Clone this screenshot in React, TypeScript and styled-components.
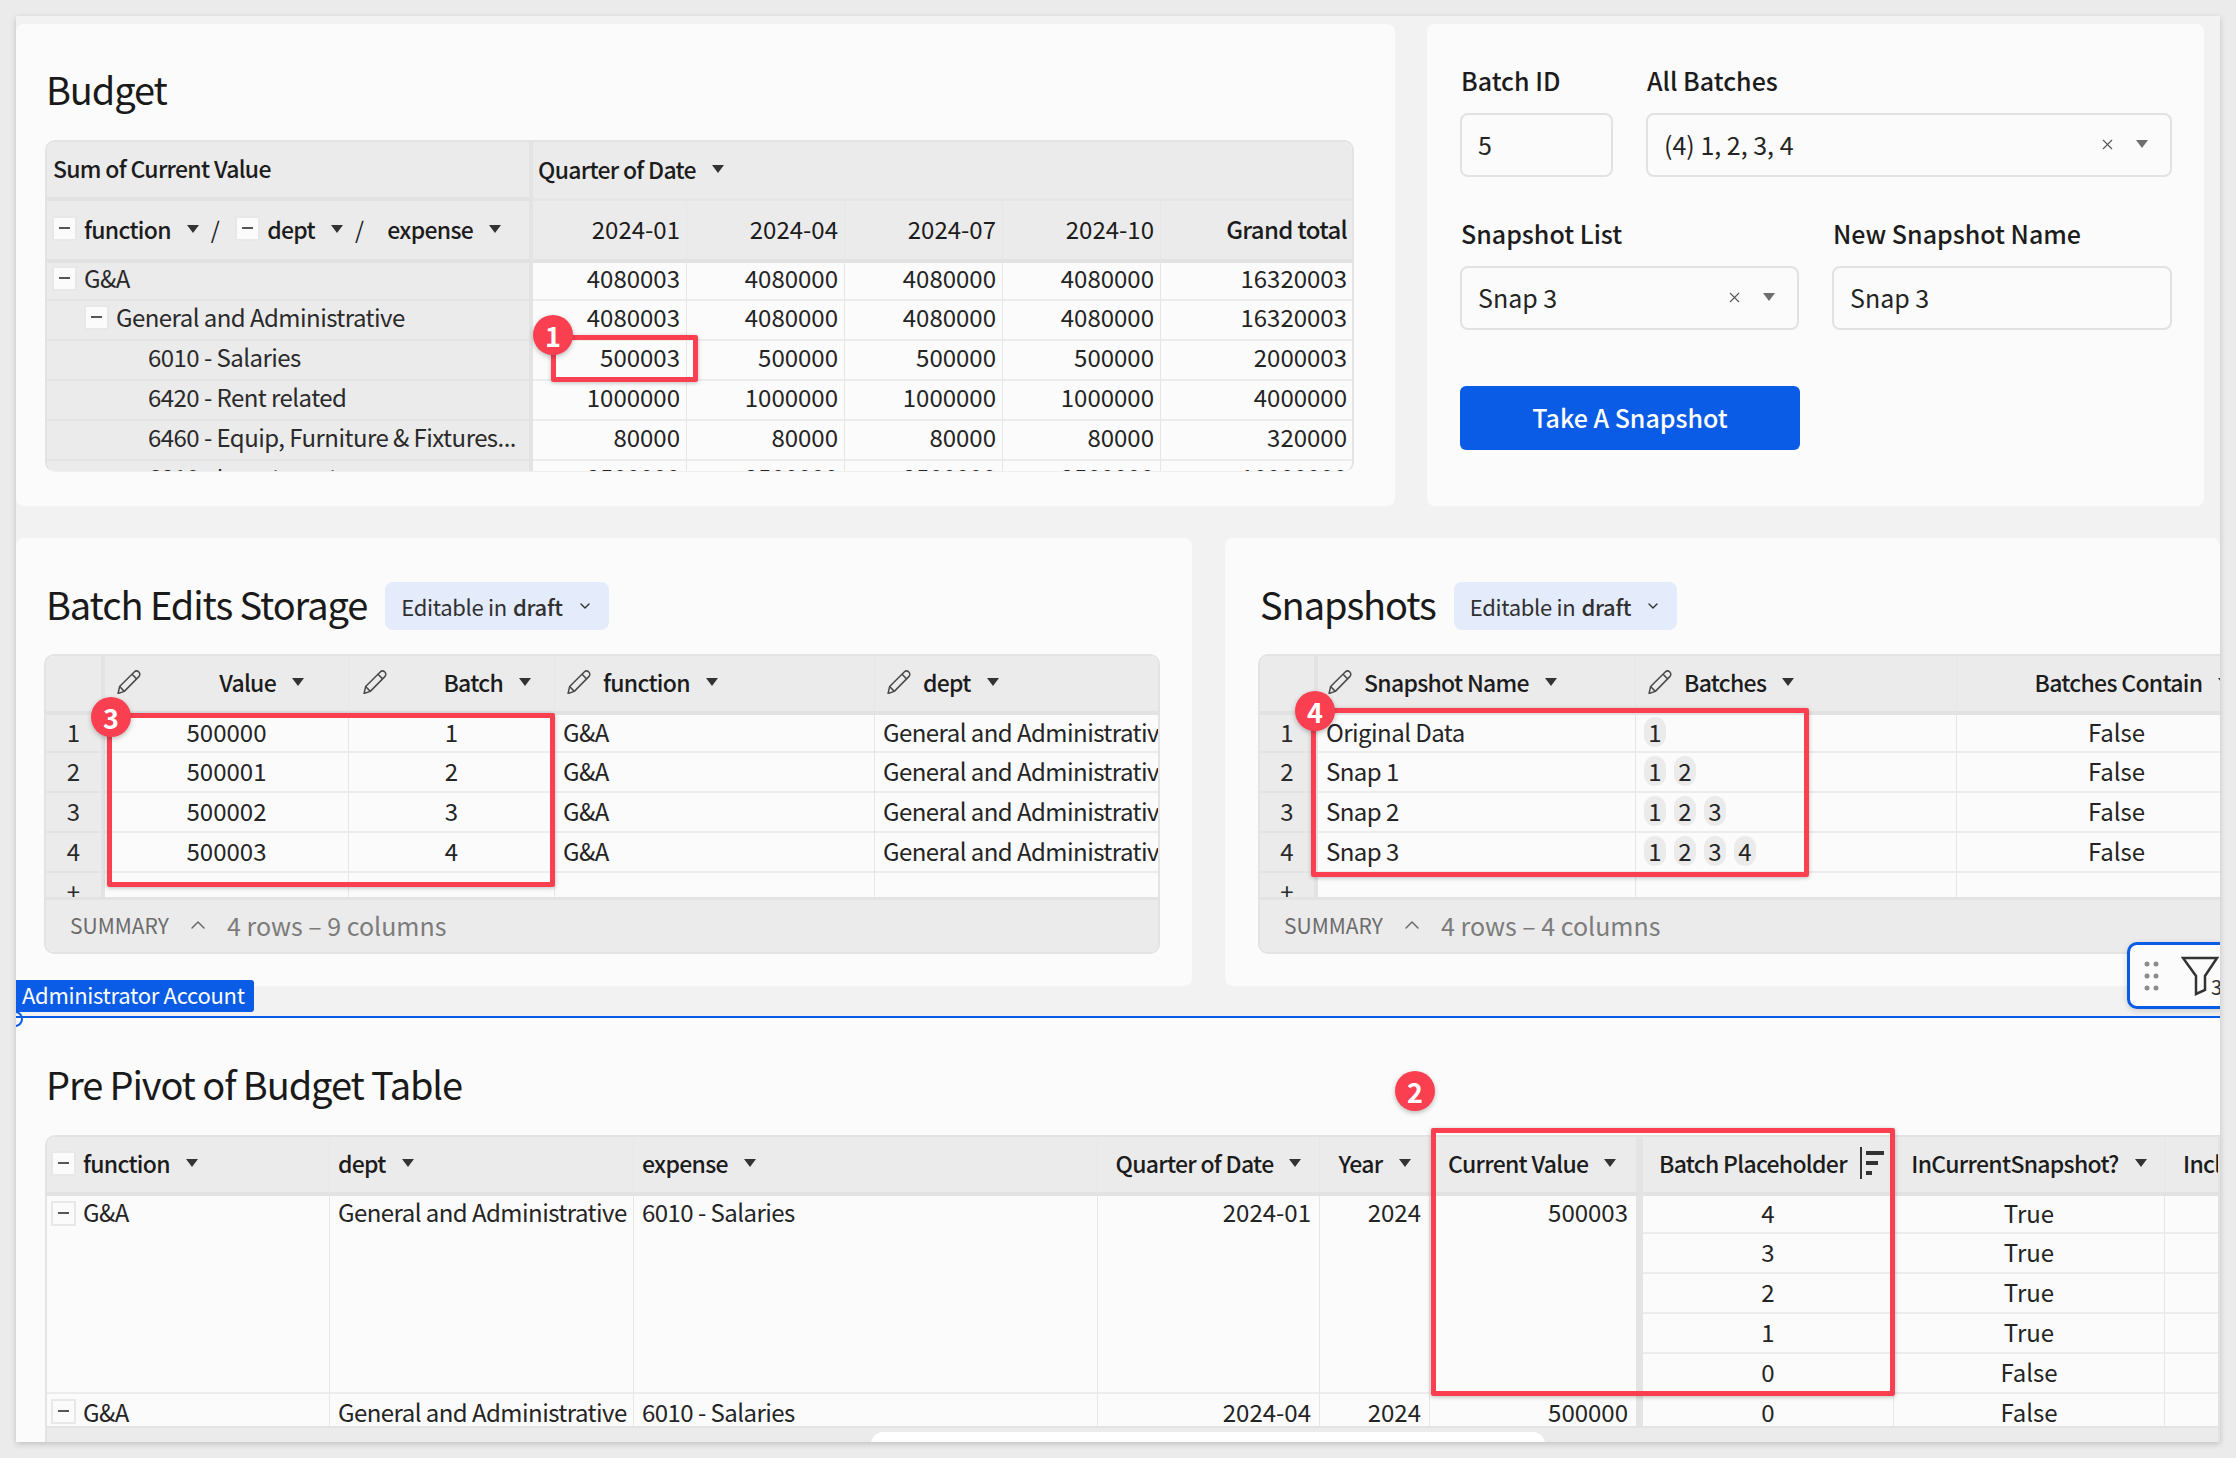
import React from "react";
import styled, { createGlobalStyle } from "styled-components";
import { ChevronDown, ChevronUp, X } from "lucide-react";

const GlobalStyle = createGlobalStyle`
  html, body {
    margin: 0;
    padding: 0;
    background: #ebebeb;
    overflow: hidden;
  }
  * {
    box-sizing: border-box;
  }
  #root {
    font-family: "Noto Sans CJK JP", "Noto Sans", sans-serif;
    color: #1f1f1f;
  }
`;

const Page = styled.div`
  width: 2236px;
  height: 1458px;
  padding: 16px;
`;

const Canvas = styled.div`
  position: relative;
  width: 2204px;
  height: 1426px;
  padding-top: 8px;
  background: #f2f2f2;
  box-shadow: 0 2px 6px rgba(0, 0, 0, 0.18);
  overflow: hidden;
  display: flex;
  flex-direction: column;
`;

const TopRow = styled.div`
  display: flex;
  gap: 32px;
  height: 482px;
`;

const MiddleRow = styled.div`
  display: flex;
  gap: 33px;
  height: 448px;
  margin-top: 32px;
`;

const Card = styled.section<{ $w?: number; $pad: string }>`
  flex: ${(p) => (p.$w ? `0 0 ${p.$w}px` : "1 1 0")};
  min-width: 0;
  display: flex;
  flex-direction: column;
  padding: ${(p) => p.$pad};
  background: #fbfbfb;
  border-radius: 8px;
  overflow: hidden;
`;

const BottomCard = styled.section`
  flex: 1;
  min-height: 0;
  display: flex;
  flex-direction: column;
  padding: 40px 0 0 29px;
  background: #fbfbfb;
`;

const Title = styled.h2`
  margin: 0 0 21px;
  padding-left: 1px;
  height: 56px;
  font-size: 38px;
  line-height: 51px;
  letter-spacing: -1.1px;
  font-weight: 400;
  color: #1a1a1a;
`;

const TitleRow = styled.div`
  display: flex;
  align-items: center;
  gap: 18px;
  height: 48px;
  margin-bottom: 24px;
  padding-left: 2px;
`;

const InlineTitle = styled(Title)`
  margin: 0;
  padding: 0;
`;

const Chip = styled.div`
  display: flex;
  align-items: center;
  gap: 14px;
  height: 48px;
  padding: 0 16px;
  background: #e4ebfa;
  border-radius: 8px;
  font-size: 22px;
  letter-spacing: -0.3px;
  color: #303030;
  b {
    margin-left: 6px;
    font-weight: 500;
  }
`;

const Table = styled.div<{ $h: number; $w?: number; $clip?: boolean }>`
  flex: none;
  display: flex;
  flex-direction: column;
  height: ${(p) => p.$h}px;
  width: ${(p) => (p.$w ? `${p.$w}px` : "auto")};
  border: 2px solid #e3e3e3;
  border-bottom: ${(p) => (p.$clip ? "1px solid #efefef" : "2px solid #e3e3e3")};
  border-radius: 10px;
  background: #fbfbfb;
  overflow: hidden;
`;

const OpenTable = styled(Table)`
  border-bottom: none;
  border-radius: 10px 0 0 0;
  flex: 1;
  height: auto;
`;

const Grid = styled.div<{ $cols: string; $rows: string; $h?: number; $lift?: number; $edge?: number }>`
  --lift: ${(p) => p.$lift ?? 3}px;
  --edge: ${(p) => p.$edge ?? 8}px;
  display: grid;
  flex: none;
  grid-template-columns: ${(p) => p.$cols};
  grid-template-rows: ${(p) => p.$rows};
  height: ${(p) => (p.$h ? `${p.$h}px` : "auto")};
  overflow: hidden;
`;

const Minus = styled.span`
  position: relative;
  flex: none;
  display: inline-block;
  width: 25px;
  height: 25px;
  margin-right: 7px;
  background: #fbfbfb;
  border: 2px solid #e8e8e8;
  &::after {
    content: "";
    position: absolute;
    left: 5px;
    right: 5px;
    top: 9px;
    height: 2px;
    background: #555;
  }
`;

const Cell = styled.div<{
  $align?: "left" | "center" | "right";
  $pad?: number;
  $span?: number;
  $colSpan?: number;
  $top?: boolean;
  $thick?: boolean;
}>`
  display: flex;
  align-items: ${(p) => (p.$top ? "flex-start" : "center")};
  justify-content: ${(p) =>
    p.$align === "right" ? "flex-end" : p.$align === "center" ? "center" : "flex-start"};
  grid-row: ${(p) => (p.$span ? `span ${p.$span}` : "auto")};
  grid-column: ${(p) => (p.$colSpan ? `span ${p.$colSpan}` : "auto")};
  min-width: 0;
  padding: 0 ${(p) => (p.$align === "right" ? "var(--edge)" : "0")} var(--lift)
    ${(p) => p.$pad ?? (p.$align === "center" ? 0 : 8)}px;
  font-size: 24px;
  line-height: ${(p) => (p.$top ? 32 : 30)}px;
  letter-spacing: -0.55px;
  white-space: nowrap;
  background: #fbfbfb;
  color: #242424;
  border-bottom: 2px solid #ececec;
  border-right: ${(p) => (p.$thick ? "7px solid #e4e4e4" : "1px solid #e6e6e6")};
  ${Minus} {
    margin-top: ${(p) => (p.$top ? 5 : 0)}px;
  }
`;

const Num = styled(Cell)`
  letter-spacing: 0;
`;

const Side = styled(Cell)`
  background: #ebebeb;
  color: #2a2a2a;
  border-bottom-color: #e4e4e4;
  border-right: 4px solid #e3e3e3;
`;

const SideNum = styled(Side)`
  letter-spacing: 0;
`;

const Head = styled(Cell)`
  background: #ebebeb;
  font-weight: 500;
  font-size: 23px;
  letter-spacing: -0.7px;
  padding-bottom: 3px;
  color: #1c1c1c;
  border-bottom: 4px solid #e2e2e2;
`;

const PlainHead = styled(Head)`
  font-weight: 400;
  font-size: 24px;
  letter-spacing: 0;
`;

const BoldHead = styled(Head)`
  font-size: 24px;
`;

const SideHead = styled(Head)`
  border-right: 4px solid #e3e3e3;
`;

const TopHead = styled(Head)`
  border-bottom: 3px solid #e6e6e6;
`;

const Caret = styled.span<{ $gap?: number; $grey?: boolean }>`
  flex: none;
  width: 0;
  height: 0;
  margin-left: ${(p) => p.$gap ?? 16}px;
  border-left: 6.5px solid transparent;
  border-right: 6.5px solid transparent;
  border-top: 8px solid ${(p) => (p.$grey ? "#6e6e6e" : "#333")};
`;

const Slash = styled.span<{ $after: number }>`
  margin: 0 ${(p) => p.$after}px 0 12px;
  font-weight: 400;
`;

const Spacer = styled.span<{ $w: number }>`
  flex: none;
  width: ${(p) => p.$w}px;
`;

const PencilWrap = styled.svg<{ $auto?: boolean }>`
  flex: none;
  width: 24px;
  height: 24px;
  margin-right: ${(p) => (p.$auto ? "auto" : "12px")};
`;

const Pencil = ({ $auto }: { $auto?: boolean }) => (
  <PencilWrap $auto={$auto} viewBox="1 1 22 22" fill="none" stroke="#4a4a4a" strokeWidth="1.4" strokeLinejoin="round">
    <path d="M2 22.5 L3.4 16.2 L16.8 2.9 C18 1.7 19.8 1.7 21 2.9 C22.2 4.1 22.2 5.9 21 7.1 L7.7 20.6 Z" />
    <path d="M14.8 4.9 L19 9.1 M3.4 16.2 L7.7 20.6" />
  </PencilWrap>
);

const SortMark = styled.svg`
  flex: none;
  width: 24px;
  height: 32px;
  margin-left: 13px;
`;

const Pill = styled.span`
  flex: none;
  width: 22px;
  height: 30px;
  margin-right: 8px;
  border-radius: 11px;
  background: #ebebeb;
  text-align: center;
  line-height: 30px;
  letter-spacing: 0;
`;

const Summary = styled.div`
  flex: 1;
  display: flex;
  align-items: center;
  padding: 0 0 2px 24px;
  background: #ebebeb;
  border-top: 3px solid #e3e3e3;
  font-size: 21px;
  color: #6b6b6b;
  svg {
    margin: 0 17px 0 17px;
  }
  span:last-child {
    font-size: 25px;
    color: #7c7c7c;
  }
`;

const ScrollTrack = styled.div`
  flex: 1;
  padding: 4px 0 0 824px;
  background: #ebebeb;
  border-top: 2px solid #e3e3e3;
`;

const ScrollThumb = styled.div`
  width: 674px;
  height: 14px;
  background: #fff;
  border-radius: 12px 12px 0 0;
`;

const FieldRow = styled.div`
  display: flex;
  gap: 33px;
  margin-bottom: 33px;
`;

const Field = styled.div<{ $w: number }>`
  flex: none;
  width: ${(p) => p.$w}px;
`;

const Label = styled.div`
  height: 48px;
  margin-bottom: 8px;
  padding-left: 1px;
  font-size: 25px;
  line-height: 47px;
  font-weight: 500;
  color: #1c1c1c;
`;

const InputBox = styled.div`
  display: flex;
  align-items: center;
  height: 64px;
  padding: 0 22px 2px 16px;
  border: 2px solid #e2e2e2;
  border-radius: 8px;
  font-size: 25px;
  color: #242424;
  svg {
    margin-left: auto;
    color: #555;
  }
`;

const SubmitButton = styled.div`
  display: flex;
  align-items: center;
  justify-content: center;
  width: 340px;
  height: 64px;
  margin-top: 23px;
  padding-bottom: 2px;
  border-radius: 6px;
  background: #0a5ce6;
  color: #fff;
  font-size: 25px;
  font-weight: 500;
`;

const Divider = styled.div`
  position: relative;
  flex: none;
  height: 2px;
  margin-top: 30px;
  background: #0a5ce6;
  z-index: 2;
  &::before {
    content: "";
    position: absolute;
    left: -9px;
    top: -5px;
    width: 12px;
    height: 12px;
    border: 2px solid #0a5ce6;
    border-radius: 50%;
  }
`;

const AccountTag = styled.div`
  position: absolute;
  left: 0;
  bottom: 6px;
  display: flex;
  align-items: center;
  width: 238px;
  height: 32px;
  padding: 0 0 4px 6px;
  background: #0a5ce6;
  border-radius: 0 3px 3px 0;
  color: #fff;
  font-size: 22px;
  line-height: 25px;
  letter-spacing: -0.3px;
  white-space: nowrap;
`;

const FilterDock = styled.div`
  position: absolute;
  left: 2111px;
  top: 926px;
  display: flex;
  align-items: center;
  width: 120px;
  height: 67px;
  padding-left: 13px;
  background: #fbfbfb;
  border: 3px solid #0a5ce6;
  border-radius: 10px;
  box-shadow: 0 2px 6px rgba(0, 0, 0, 0.15);
  svg {
    flex: none;
  }
`;

const FilterCount = styled.span`
  position: absolute;
  left: 81px;
  top: 30px;
  font-size: 20px;
  line-height: 24px;
  color: #333;
`;

const RedBox = styled.div<{ $x: number; $y: number; $w: number; $h: number }>`
  position: absolute;
  left: ${(p) => p.$x - 16}px;
  top: ${(p) => p.$y - 16}px;
  width: ${(p) => p.$w}px;
  height: ${(p) => p.$h}px;
  border: 5px solid #fa4050;
  border-radius: 2px;
  box-shadow: 0 1px 4px rgba(0, 0, 0, 0.25);
  z-index: 3;
`;

const Dot = styled.div<{ $cx: number; $cy: number }>`
  position: absolute;
  left: ${(p) => p.$cx - 16 - 20}px;
  top: ${(p) => p.$cy - 16 - 20}px;
  display: flex;
  align-items: center;
  justify-content: center;
  width: 40px;
  height: 40px;
  border-radius: 50%;
  background: #fa4050;
  box-shadow: 0 2px 5px rgba(0, 0, 0, 0.25);
  color: #fff;
  font-size: 27px;
  font-weight: 700;
  z-index: 4;
`;

const pivotRows = [
  { label: "G&A", depth: 5, minus: true, vals: ["4080003", "4080000", "4080000", "4080000", "16320003"] },
  { label: "General and Administrative", depth: 37, minus: true, vals: ["4080003", "4080000", "4080000", "4080000", "16320003"] },
  { label: "6010 - Salaries", depth: 101, vals: ["500003", "500000", "500000", "500000", "2000003"] },
  { label: "6420 - Rent related", depth: 101, vals: ["1000000", "1000000", "1000000", "1000000", "4000000"] },
  { label: "6460 - Equip, Furniture & Fixtures...", depth: 101, vals: ["80000", "80000", "80000", "80000", "320000"] },
  { label: "6810 - Investment", depth: 101, vals: ["2500000", "2500000", "2500000", "2500000", "10000000"] },
];

const batchRows = [
  ["500000", "1"],
  ["500001", "2"],
  ["500002", "3"],
  ["500003", "4"],
];

const snapRows = [
  { name: "Original Data", batches: ["1"] },
  { name: "Snap 1", batches: ["1", "2"] },
  { name: "Snap 2", batches: ["1", "2", "3"] },
  { name: "Snap 3", batches: ["1", "2", "3", "4"] },
];

const subRows = [
  ["4", "True"],
  ["3", "True"],
  ["2", "True"],
  ["1", "True"],
  ["0", "False"],
];

const boxes = [
  { x: 551, y: 335, w: 147, h: 47 },
  { x: 107, y: 713, w: 448, h: 174 },
  { x: 1311, y: 708, w: 498, h: 169 },
  { x: 1431, y: 1128, w: 464, h: 268 },
];

const dots = [
  { n: 1, cx: 553, cy: 335 },
  { n: 2, cx: 1415, cy: 1091 },
  { n: 3, cx: 111, cy: 717 },
  { n: 4, cx: 1315, cy: 711 },
];

const App = () => {
  return (
    <>
      <GlobalStyle />
      <Page>
        <Canvas>
          <TopRow>
            <Card $w={1379} $pad="39px 41px 0 29px">
              <Title>Budget</Title>
              <Table $h={332} $clip>
                <Grid
                  $cols="486px 154px 158px 158px 158px 193px"
                  $rows="59px 62px 38px 40px 40px 40px 40px 40px"
                  $lift={6}
                  $edge={6}
                >
                  <SideHead $pad={6}>Sum of Current Value</SideHead>
                  <TopHead $colSpan={5} $pad={5}>
                    Quarter of Date
                    <Caret />
                  </TopHead>
                  <SideHead $pad={5}>
                    <Minus />
                    function
                    <Caret />
                    <Slash $after={16}>/</Slash>
                    <Minus />
                    dept
                    <Caret />
                    <Slash $after={24}>/</Slash>
                    expense
                    <Caret />
                  </SideHead>
                  {["2024-01", "2024-04", "2024-07", "2024-10"].map((q) => (
                    <PlainHead key={q} $align="right">
                      {q}
                    </PlainHead>
                  ))}
                  <BoldHead $align="right">Grand total</BoldHead>
                  {pivotRows.map((row) => (
                    <React.Fragment key={row.label}>
                      <Side $pad={row.depth}>
                        {row.minus && <Minus />}
                        {row.label}
                      </Side>
                      {row.vals.map((v, i) => (
                        <Num key={i} $align="right">
                          {v}
                        </Num>
                      ))}
                    </React.Fragment>
                  ))}
                </Grid>
              </Table>
            </Card>
            <Card $w={777} $pad="33px 0 0 33px">
              <FieldRow>
                <Field $w={153}>
                  <Label>Batch ID</Label>
                  <InputBox>5</InputBox>
                </Field>
                <Field $w={526}>
                  <Label>All Batches</Label>
                  <InputBox>
                    (4) 1, 2, 3, 4
                    <X size={17} strokeWidth={1.5} />
                    <Caret $grey $gap={20} />
                  </InputBox>
                </Field>
              </FieldRow>
              <FieldRow>
                <Field $w={339}>
                  <Label>Snapshot List</Label>
                  <InputBox>
                    Snap 3
                    <X size={17} strokeWidth={1.5} />
                    <Caret $grey $gap={20} />
                  </InputBox>
                </Field>
                <Field $w={340}>
                  <Label>New Snapshot Name</Label>
                  <InputBox>Snap 3</InputBox>
                </Field>
              </FieldRow>
              <SubmitButton>Take A Snapshot</SubmitButton>
            </Card>
          </TopRow>
          <MiddleRow>
            <Card $w={1176} $pad="44px 32px 0 28px">
              <TitleRow>
                <InlineTitle>Batch Edits Storage</InlineTitle>
                <Chip>
                  <span>
                    Editable in<b>draft</b>
                  </span>
                  <ChevronDown size={16} />
                </Chip>
              </TitleRow>
              <Table $h={300}>
                <Grid
                  $cols="59px 244px 206px 320px 285px"
                  $rows="59px 38px 40px 40px 40px 40px"
                  $h={241}
                >
                  <SideHead />
                  <Head $pad={12} $align="right">
                    <Pencil $auto />
                    Value
                    <Caret />
                    <Spacer $w={36} />
                  </Head>
                  <Head $pad={14} $align="right">
                    <Pencil $auto />
                    Batch
                    <Caret />
                    <Spacer $w={15} />
                  </Head>
                  <Head $pad={12}>
                    <Pencil />
                    function
                    <Caret />
                  </Head>
                  <Head $pad={12}>
                    <Pencil />
                    dept
                    <Caret />
                  </Head>
                  {batchRows.map((row, i) => (
                    <React.Fragment key={row[0]}>
                      <SideNum $align="center">{i + 1}</SideNum>
                      <Num $align="center">{row[0]}</Num>
                      <Num $align="center">{row[1]}</Num>
                      <Cell>G&amp;A</Cell>
                      <Cell>General and Administrative</Cell>
                    </React.Fragment>
                  ))}
                  <SideNum $align="center">+</SideNum>
                  <Cell />
                  <Cell />
                  <Cell />
                  <Cell />
                </Grid>
                <Summary>
                  <span>SUMMARY</span>
                  <ChevronUp size={24} strokeWidth={1.5} />
                  <span>4 rows – 9 columns</span>
                </Summary>
              </Table>
            </Card>
            <Card $pad="44px 0 0 33px">
              <TitleRow>
                <InlineTitle>Snapshots</InlineTitle>
                <Chip>
                  <span>
                    Editable in<b>draft</b>
                  </span>
                  <ChevronDown size={16} />
                </Chip>
              </TitleRow>
              <Table $h={300} $w={1100}>
                <Grid
                  $cols="58px 318px 321px 320px 81px"
                  $rows="59px 38px 40px 40px 40px 40px"
                  $h={241}
                >
                  <SideHead />
                  <Head $pad={10}>
                    <Pencil />
                    Snapshot Name
                    <Caret />
                  </Head>
                  <Head $pad={12}>
                    <Pencil />
                    Batches
                    <Caret />
                  </Head>
                  <Head $align="center" $pad={32}>
                    Batches Contain
                    <Caret />
                  </Head>
                  <Head />
                  {snapRows.map((row, i) => (
                    <React.Fragment key={row.name}>
                      <SideNum $align="center">{i + 1}</SideNum>
                      <Cell>{row.name}</Cell>
                      <Cell>
                        {row.batches.map((b) => (
                          <Pill key={b}>{b}</Pill>
                        ))}
                      </Cell>
                      <Num $align="center">False</Num>
                      <Cell />
                    </React.Fragment>
                  ))}
                  <SideNum $align="center">+</SideNum>
                  <Cell />
                  <Cell />
                  <Cell />
                  <Cell />
                </Grid>
                <Summary>
                  <span>SUMMARY</span>
                  <ChevronUp size={24} strokeWidth={1.5} />
                  <span>4 rows – 4 columns</span>
                </Summary>
              </Table>
            </Card>
          </MiddleRow>
          <FilterDock>
            <svg width="20" height="40" viewBox="0 0 20 40" fill="#8c8c8c">
              <circle cx="4" cy="8" r="2.5" />
              <circle cx="13" cy="8" r="2.5" />
              <circle cx="4" cy="20" r="2.5" />
              <circle cx="13" cy="20" r="2.5" />
              <circle cx="4" cy="32" r="2.5" />
              <circle cx="13" cy="32" r="2.5" />
            </svg>
            <svg width="38" height="40" viewBox="0 0 38 40" fill="none" stroke="#333" strokeWidth="2.5" style={{ marginLeft: 18 }}>
              <path d="M2 2 H36 L24 20 V34 L15 38 V20 Z" />
            </svg>
            <FilterCount>3</FilterCount>
          </FilterDock>
          <Divider>
            <AccountTag>Administrator Account</AccountTag>
          </Divider>
          <BottomCard>
            <Title>Pre Pivot of Budget Table</Title>
            <OpenTable $h={0}>
              <Grid
                $cols="283px 304px 464px 222px 110px 213px 251px 271px 120px"
                $rows="59px 38px 40px 40px 40px 40px 40px"
                $h={289}
              >
                <Head $pad={4}>
                  <Minus />
                  function
                  <Caret />
                </Head>
                <Head>
                  dept
                  <Caret />
                </Head>
                <Head>
                  expense
                  <Caret />
                </Head>
                <Head $align="center">
                  Quarter of Date
                  <Caret />
                </Head>
                <Head $align="center">
                  Year
                  <Caret />
                </Head>
                <Head $thick $pad={18}>
                  Current Value
                  <Caret />
                </Head>
                <Head $pad={16}>
                  Batch Placeholder
                  <SortMark viewBox="0 0 24 32" fill="#333">
                    <rect x="0" y="0" width="2" height="32" />
                    <rect x="6" y="4" width="18" height="4" />
                    <rect x="6" y="14" width="12" height="4" />
                    <rect x="6" y="24" width="6" height="4" />
                  </SortMark>
                </Head>
                <Head $align="center">
                  InCurrentSnapshot?
                  <Caret />
                </Head>
                <Head $pad={18}>Include</Head>

                <Cell $top $span={5} $pad={4}>
                  <Minus />
                  G&amp;A
                </Cell>
                <Cell $top $span={5}>General and Administrative</Cell>
                <Cell $top $span={5}>6010 - Salaries</Cell>
                <Num $top $span={5} $align="right">2024-01</Num>
                <Num $top $span={5} $align="right">2024</Num>
                <Num $top $span={5} $align="right" $thick>500003</Num>
                {subRows.map((row) => (
                  <React.Fragment key={row[0]}>
                    <Num $align="center">{row[0]}</Num>
                    <Num $align="center">{row[1]}</Num>
                    <Cell />
                  </React.Fragment>
                ))}
                <Cell $pad={4}>
                  <Minus />
                  G&amp;A
                </Cell>
                <Cell>General and Administrative</Cell>
                <Cell>6010 - Salaries</Cell>
                <Num $align="right">2024-04</Num>
                <Num $align="right">2024</Num>
                <Num $align="right" $thick>500000</Num>
                <Num $align="center">0</Num>
                <Num $align="center">False</Num>
                <Cell />
              </Grid>
              <ScrollTrack>
                <ScrollThumb />
              </ScrollTrack>
            </OpenTable>
          </BottomCard>
          {boxes.map((b) => (
            <RedBox key={b.x} $x={b.x} $y={b.y} $w={b.w} $h={b.h} />
          ))}
          {dots.map((d) => (
            <Dot key={d.n} $cx={d.cx} $cy={d.cy}>
              {d.n}
            </Dot>
          ))}
        </Canvas>
      </Page>
    </>
  );
};

export default App;
